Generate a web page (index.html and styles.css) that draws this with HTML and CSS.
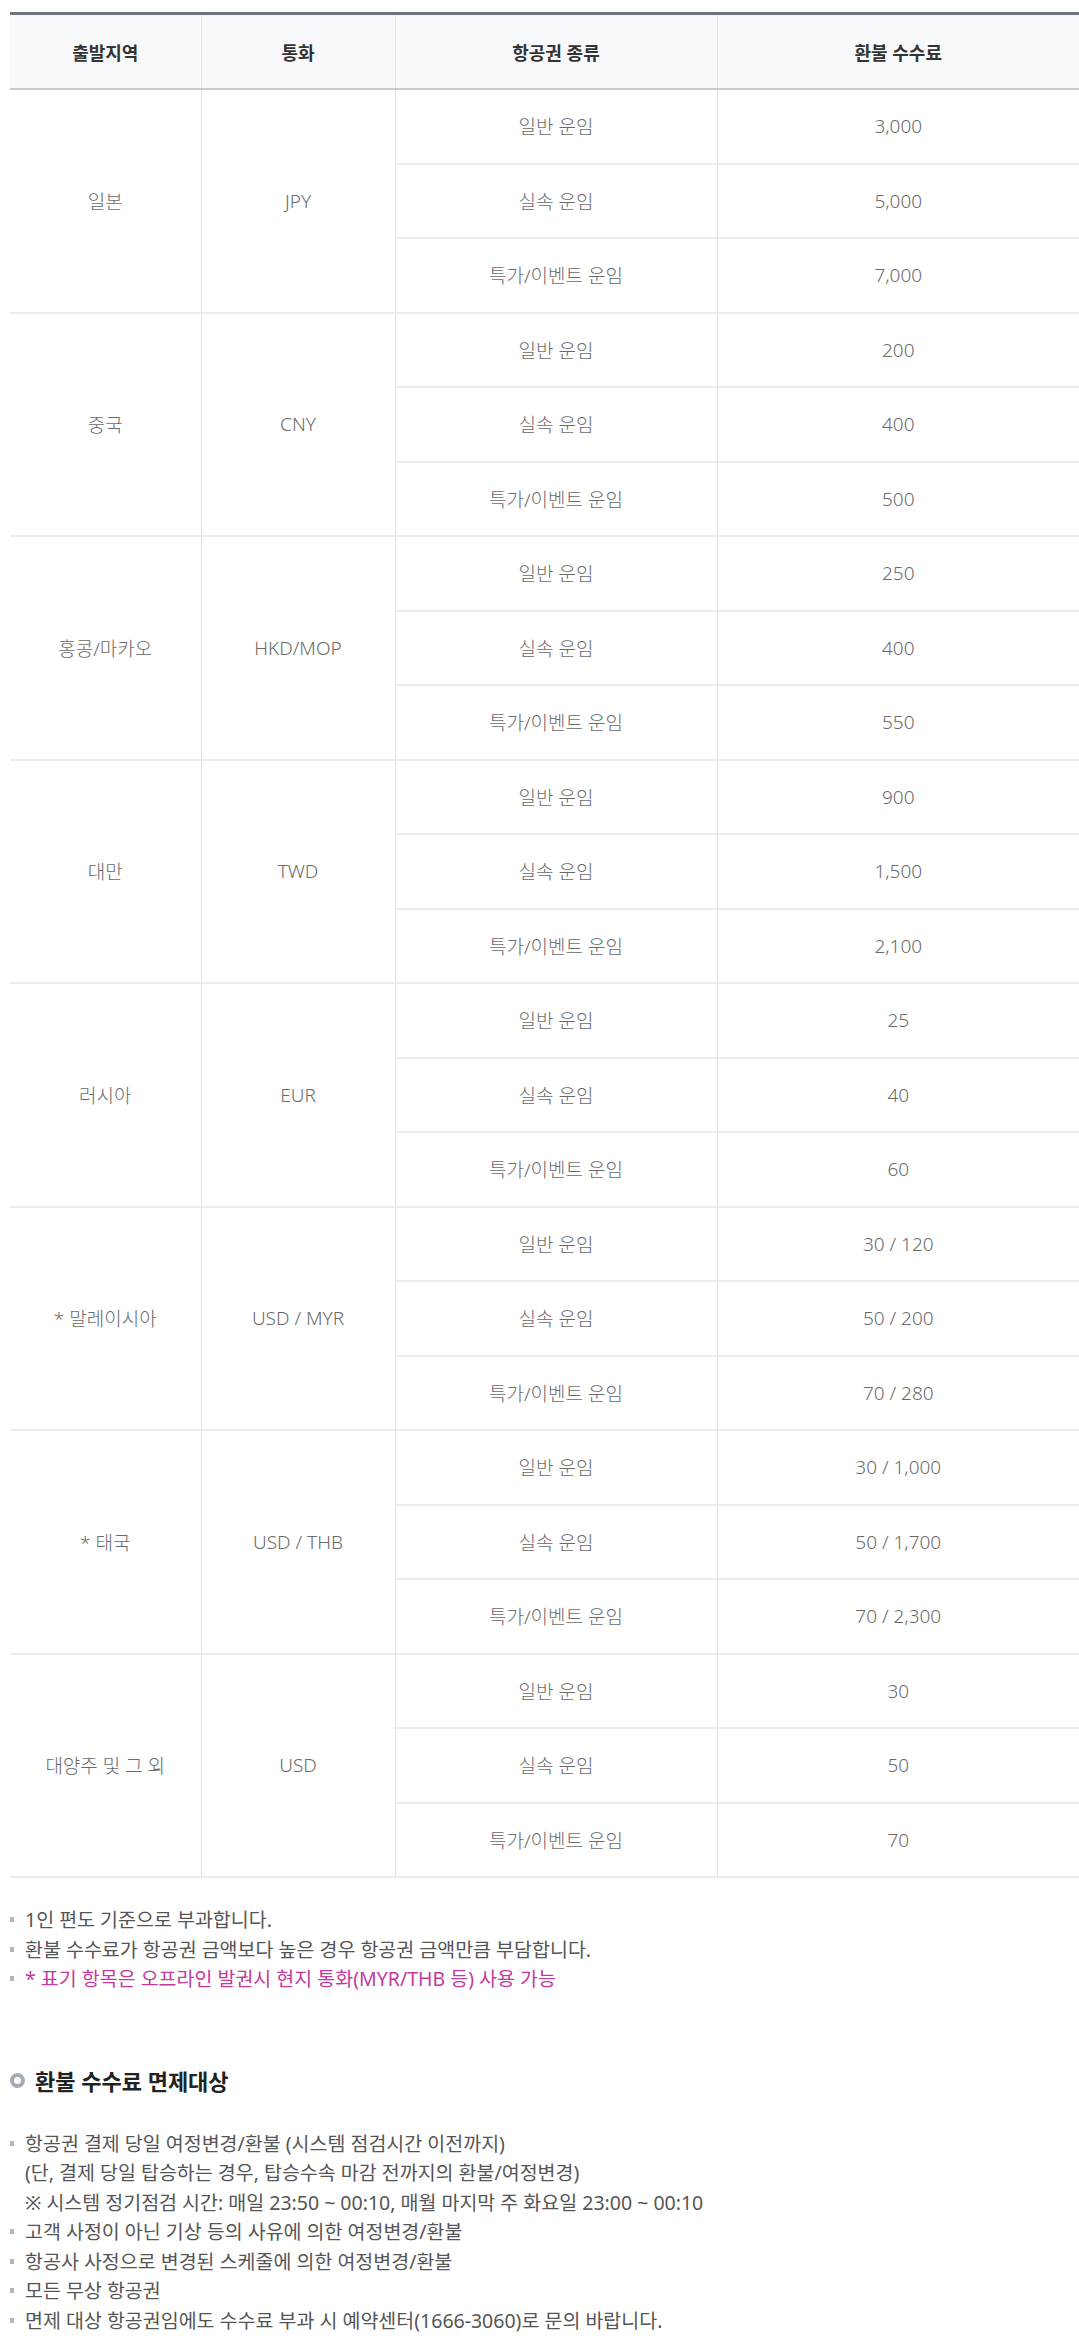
FILE: index.html
```html
<!DOCTYPE html>
<html lang="ko">
<head>
<meta charset="utf-8">
<title>환불 수수료</title>
<link rel="stylesheet" href="styles.css">
</head>
<body>
<div class="page">
  <table class="fee-table">
    <colgroup>
      <col class="c1"><col class="c2"><col class="c3"><col class="c4">
    </colgroup>
    <thead>
      <tr><th>출발지역</th><th>통화</th><th>항공권 종류</th><th>환불 수수료</th></tr>
    </thead>
    <tbody>
      <tr><td rowspan="3">일본</td><td rowspan="3">JPY</td><td>일반 운임</td><td>3,000</td></tr>
      <tr><td>실속 운임</td><td>5,000</td></tr>
      <tr><td>특가/이벤트 운임</td><td>7,000</td></tr>

      <tr><td rowspan="3">중국</td><td rowspan="3">CNY</td><td>일반 운임</td><td>200</td></tr>
      <tr><td>실속 운임</td><td>400</td></tr>
      <tr><td>특가/이벤트 운임</td><td>500</td></tr>

      <tr><td rowspan="3">홍콩/마카오</td><td rowspan="3">HKD/MOP</td><td>일반 운임</td><td>250</td></tr>
      <tr><td>실속 운임</td><td>400</td></tr>
      <tr><td>특가/이벤트 운임</td><td>550</td></tr>

      <tr><td rowspan="3">대만</td><td rowspan="3">TWD</td><td>일반 운임</td><td>900</td></tr>
      <tr><td>실속 운임</td><td>1,500</td></tr>
      <tr><td>특가/이벤트 운임</td><td>2,100</td></tr>

      <tr><td rowspan="3">러시아</td><td rowspan="3">EUR</td><td>일반 운임</td><td>25</td></tr>
      <tr><td>실속 운임</td><td>40</td></tr>
      <tr><td>특가/이벤트 운임</td><td>60</td></tr>

      <tr><td rowspan="3">* 말레이시아</td><td rowspan="3">USD / MYR</td><td>일반 운임</td><td>30 / 120</td></tr>
      <tr><td>실속 운임</td><td>50 / 200</td></tr>
      <tr><td>특가/이벤트 운임</td><td>70 / 280</td></tr>

      <tr><td rowspan="3">* 태국</td><td rowspan="3">USD / THB</td><td>일반 운임</td><td>30 / 1,000</td></tr>
      <tr><td>실속 운임</td><td>50 / 1,700</td></tr>
      <tr><td>특가/이벤트 운임</td><td>70 / 2,300</td></tr>

      <tr><td rowspan="3">대양주 및 그 외</td><td rowspan="3">USD</td><td>일반 운임</td><td>30</td></tr>
      <tr><td>실속 운임</td><td>50</td></tr>
      <tr><td>특가/이벤트 운임</td><td>70</td></tr>
    </tbody>
  </table>

  <ul class="notes">
    <li>1인 편도 기준으로 부과합니다.</li>
    <li>환불 수수료가 항공권 금액보다 높은 경우 항공권 금액만큼 부담합니다.</li>
    <li class="accent">* 표기 항목은 오프라인 발권시 현지 통화(MYR/THB 등) 사용 가능</li>
  </ul>

  <h2 class="section-title"><span class="ring"></span>환불 수수료 면제대상</h2>

  <ul class="notes exempt">
    <li>항공권 결제 당일 여정변경/환불 (시스템 점검시간 이전까지)<br>(단, 결제 당일 탑승하는 경우, 탑승수속 마감 전까지의 환불/여정변경)<br>※ 시스템 정기점검 시간: 매일 23:50 ~ 00:10, 매월 마지막 주 화요일 23:00 ~ 00:10</li>
    <li>고객 사정이 아닌 기상 등의 사유에 의한 여정변경/환불</li>
    <li>항공사 사정으로 변경된 스케줄에 의한 여정변경/환불</li>
    <li>모든 무상 항공권</li>
    <li>면제 대상 항공권임에도 수수료 부과 시 예약센터(1666-3060)로 문의 바랍니다.</li>
  </ul>
</div>
</body>
</html>
```

FILE: styles.css
```css
html, body {
  margin: 0;
  padding: 0;
  background: #ffffff;
}

body {
  font-family: "Noto Sans", "Noto Sans CJK KR", sans-serif;
  color: #666666;
}

.page {
  padding: 12px 0 0 10px;
}

.fee-table {
  width: 100%;
  border-collapse: collapse;
  table-layout: fixed;
  border-top: 3px solid #6d747c;
  border-bottom: 2px solid #bcc2cc;
}

.c1 { width: 191px; }
.c2 { width: 194px; }
.c3 { width: 322px; }

.fee-table th {
  height: 73px;
  padding: 0;
  background: #f8f9fb;
  color: #333333;
  font-size: 18px;
  font-weight: 700;
  text-align: center;
  vertical-align: middle;
  border-left: 1px solid #e6e7ea;
  border-bottom: 2px solid #c7cbd3;
}

.fee-table th:first-child {
  border-left: none;
}

.fee-table td {
  height: 72.5px;
  padding: 0;
  font-size: 19px;
  font-weight: 300;
  color: #6a6a6a;
  text-align: center;
  vertical-align: middle;
  border-left: 1px solid #e0e0e0;
  border-bottom: 2px solid #ececec;
}

.fee-table tbody tr:nth-child(3n+1) td:first-child {
  border-left: none;
}

.notes {
  list-style: none;
  margin: 27px 0 0;
  padding: 0;
  font-size: 19.5px;
  line-height: 29.5px;
  color: #555555;
}

.notes li {
  position: relative;
  padding-left: 15px;
}

.notes li::before {
  content: "";
  position: absolute;
  left: 0;
  top: 12px;
  width: 4px;
  height: 5px;
  background: #b5b5b5;
}

.notes .accent {
  color: #c23a9e;
}

.section-title {
  display: flex;
  align-items: center;
  gap: 10px;
  margin: 72px 0 0;
  font-size: 22px;
  line-height: 30px;
  font-weight: 700;
  color: #222222;
}

.ring {
  box-sizing: border-box;
  width: 15px;
  height: 15px;
  border-radius: 50%;
  border: 4px solid #a3abb5;
  background: #ffffff;
}

.notes.exempt {
  margin-top: 33px;
}
```
